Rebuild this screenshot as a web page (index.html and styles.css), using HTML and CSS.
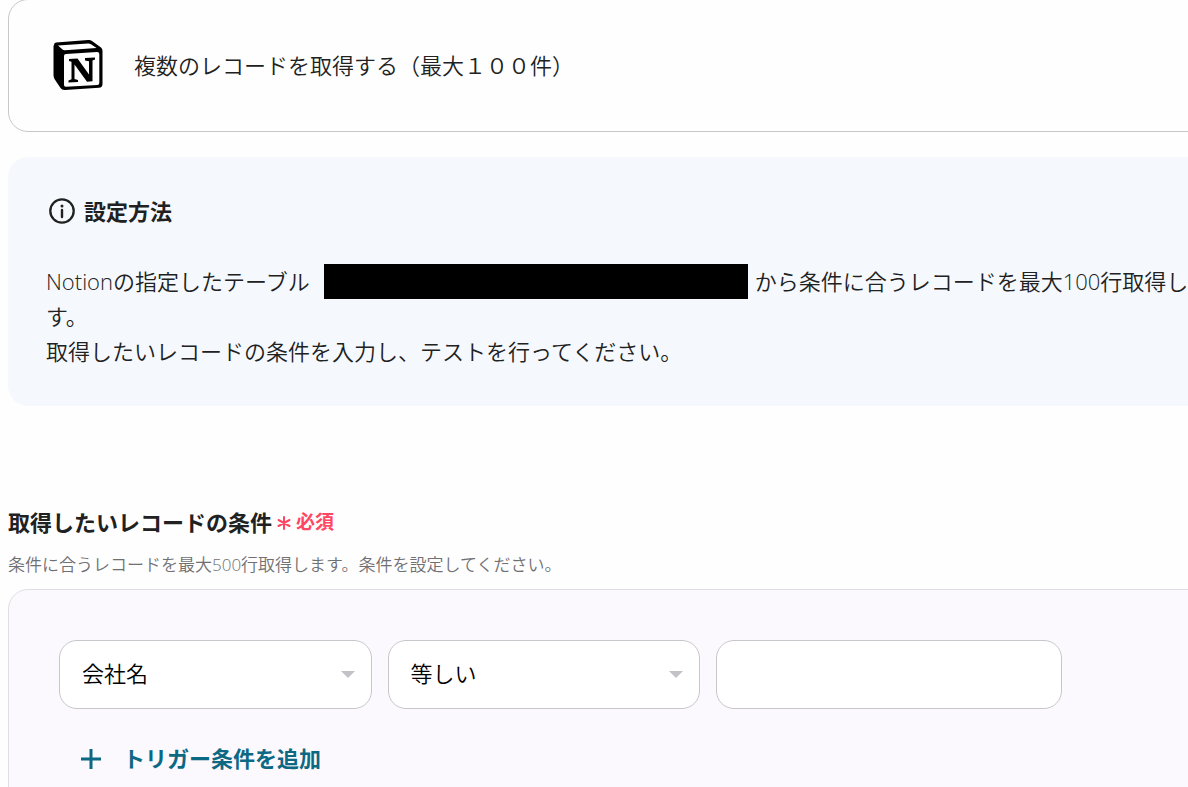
FILE: index.html
```html
<!DOCTYPE html>
<html lang="ja">
<head>
<meta charset="utf-8">
<meta name="viewport" content="width=device-width, initial-scale=1">
<title>複数のレコードを取得する</title>
<link rel="stylesheet" href="styles.css">
</head>
<body>
<main class="page">
  <header class="action">
    <svg class="action-logo" viewBox="1 1 51 51" aria-hidden="true">
      <path d="M2 6Q2 4 4 3.6L36 1Q38 .8 40 2L49 8.500Q50.500 9.500 50.500 12V45Q50.500 48.500 47 48.800L13 51Q10 51.200 8.500 49L2.500 40Q1.500 38.500 1.500 36V7Z"/>
      <path fill="#fff" d="M6 6.500L36 4.400Q37.500 4.300 39 5.300L44.500 9L13 11.200Q11.500 11.300 10.500 10.500ZM12 17Q12 15.300 14 15.100L45 13Q47.300 12.900 47.300 15V44Q47.300 45.800 45.300 46L14 47.800Q12 47.900 12 46Z"/>
      <path d="M17 20L25.500 19.400L37 35.500V22.200L33 21.500V19L43 18.400V20.500L40.500 21.600V42.300L35 42.800L22.500 25.500V40L26 41V42.900L16.500 43.400V41.400L19.500 40.200V22.800L17 22Z"/>
    </svg>
    <h1 class="action-title">複数のレコードを取得する（最大１００件）</h1>
  </header>

  <section class="notice">
    <h2 class="notice-title">
      <svg class="notice-icon" viewBox="0 0 26 26" aria-hidden="true">
        <circle cx="13" cy="13" r="11.700" fill="none" stroke="currentColor" stroke-width="2.300"/>
        <circle cx="13" cy="8" r="1.500" fill="currentColor"/>
        <path d="M13 12V19" stroke="currentColor" stroke-width="2.400" stroke-linecap="round"/>
      </svg>
      設定方法
    </h2>
    <p class="notice-text">Notionの指定したテーブル<span class="redacted"></span>から条件に合うレコードを最大100行取得します。<br>取得したいレコードの条件を入力し、テストを行ってください。</p>
  </section>

  <section class="conditions">
    <h2 class="field-title">取得したいレコードの条件
      <span class="required">
        <svg class="required-icon" viewBox="0 0 14 14" aria-hidden="true"><path d="M7 1V13M1.500 4L12.500 10M12.500 4L1.500 10"/></svg>
        必須
      </span>
    </h2>
    <p class="field-help">条件に合うレコードを最大500行取得します。条件を設定してください。</p>
    <div class="panel">
      <div class="condition">
        <span class="dropdown">
          <select class="control" aria-label="項目"><option>会社名</option></select>
          <svg class="caret" viewBox="0 0 14 7" aria-hidden="true"><path d="M0 0H14L7 7Z"/></svg>
        </span>
        <span class="dropdown">
          <select class="control" aria-label="比較方法"><option>等しい</option></select>
          <svg class="caret" viewBox="0 0 14 7" aria-hidden="true"><path d="M0 0H14L7 7Z"/></svg>
        </span>
        <input class="control" type="text" aria-label="値">
      </div>
      <button class="add" type="button">
        <svg class="add-icon" viewBox="0 0 20 20" aria-hidden="true"><path d="M10 0V20M0 10H20"/></svg>
        トリガー条件を追加
      </button>
    </div>
  </section>
</main>
</body>
</html>
```

FILE: styles.css
```css
* {
  box-sizing: border-box;
}

body {
  margin: 0;
  height: 100vh;
  overflow: hidden;
  background: #fefefe;
  color: #212121;
  font-family: "Open Sans", "Noto Sans CJK JP", sans-serif;
  font-size: 22px;
  font-weight: 350;
}

h1,
h2,
p {
  margin: 0;
}

.page {
  margin: -1px -64px 0 8px;
}

.action {
  display: flex;
  align-items: center;
  gap: 30px;
  padding: 40px 44px;
  border: 1px solid #c8c8ca;
  border-radius: 20px;
}

.action-logo {
  width: 51px;
  height: 51px;
  flex: none;
}

.action-title {
  font-size: 22px;
  font-weight: 350;
  line-height: 35px;
}

.notice {
  margin-top: 25px;
  padding: 37px 38px;
  border-radius: 20px;
  background: #f5f9fd;
}

.notice-title {
  display: flex;
  align-items: center;
  gap: 9px;
  margin: 0 0 35px 3px;
  font-size: 22px;
  font-weight: 700;
  line-height: 35px;
}

.notice-icon {
  width: 26px;
  height: 26px;
  margin-bottom: 2px;
}

.notice-text {
  line-height: 35px;
}

.redacted {
  display: inline-block;
  width: 424px;
  height: 35px;
  margin: 0 7px 0 14px;
  background: #000;
  vertical-align: top;
}

.conditions {
  margin-top: 99px;
}

.field-title {
  display: flex;
  align-items: center;
  gap: 5px;
  font-size: 22px;
  font-weight: 700;
  line-height: 35px;
}

.required {
  display: flex;
  align-items: center;
  gap: 5px;
  color: #ff4763;
  font-size: 19px;
}

.required-icon {
  width: 14px;
  height: 14px;
  fill: none;
  stroke: currentColor;
  stroke-width: 2;
  stroke-linecap: round;
}

.field-help {
  margin-top: 12px;
  color: #707073;
  font-size: 17px;
  line-height: 25px;
}

.panel {
  margin-top: 12px;
  padding: 50px;
  border: 1px solid #dedee4;
  border-radius: 20px;
  background: #fbf9fd;
}

.condition {
  display: grid;
  grid-template-columns: 28fr 28fr 31fr 123px;
  gap: 16px;
}

.dropdown {
  display: grid;
  align-items: center;
}

.control {
  width: 100%;
  height: 69px;
  padding: 0 22px 3px;
  border: 1px solid #c8c6cb;
  border-radius: 18px;
  background: #fff;
  color: #000;
  font: inherit;
  appearance: none;
}

.dropdown .control,
.caret {
  grid-area: 1 / 1;
}

.caret {
  width: 14px;
  height: 7px;
  margin-right: 17px;
  justify-self: end;
  fill: #c4c2c6;
  pointer-events: none;
}

.add {
  display: flex;
  align-items: center;
  gap: 22px;
  margin-top: 32px;
  padding: 0 22px;
  border: 0;
  background: none;
  color: #0d6884;
  font: inherit;
  font-weight: 700;
  line-height: 35px;
}

.add-icon {
  width: 20px;
  height: 20px;
  stroke: currentColor;
  stroke-width: 3;
}
```
